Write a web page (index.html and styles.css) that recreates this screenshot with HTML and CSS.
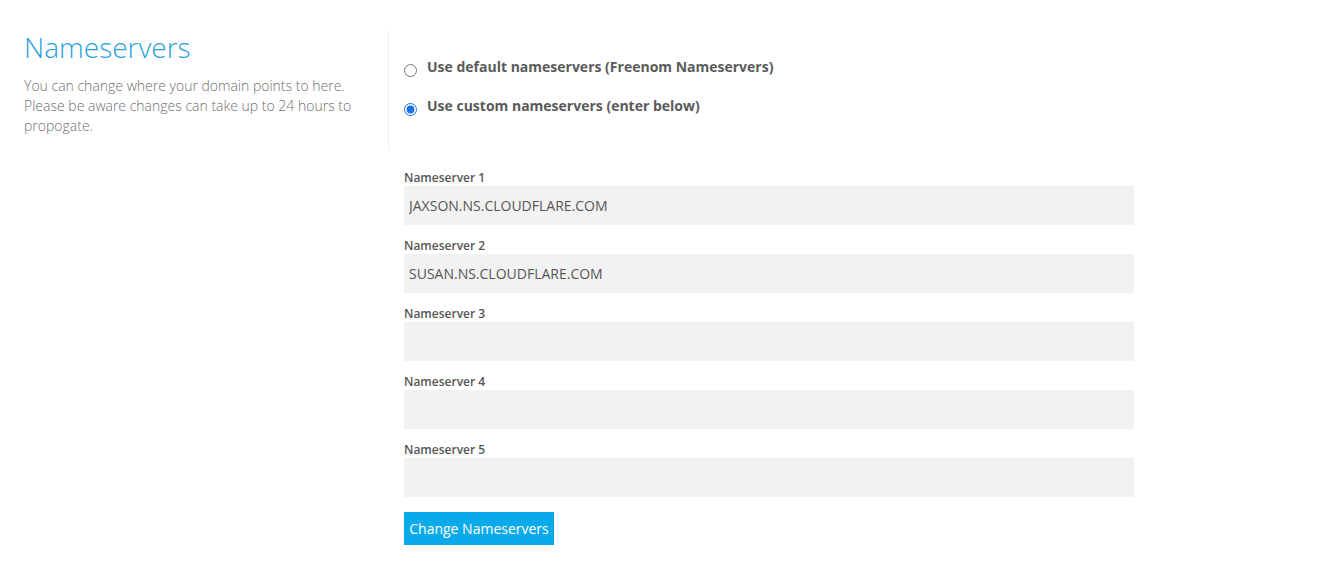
FILE: index.html
```html
<!DOCTYPE html>
<html>
<head>
<meta charset="utf-8">
<link rel="stylesheet" href="styles.css">
</head>
<body>
<div class="page">
  <div class="top">
    <div class="intro">
      <h1 class="title">Nameservers</h1>
      <p class="desc">You can change where your domain points to here. Please be aware changes can take up to 24 hours to propogate.</p>
    </div>
    <div class="choices">
      <label class="choice"><input type="radio" name="ns" class="radio"><span>Use default nameservers (Freenom Nameservers)</span></label>
      <label class="choice"><input type="radio" name="ns" class="radio" checked><span>Use custom nameservers (enter below)</span></label>
    </div>
  </div>
  <form class="fields">
    <div class="field"><label class="flabel">Nameserver 1</label><input class="finput" type="text" value="JAXSON.NS.CLOUDFLARE.COM"></div>
    <div class="field"><label class="flabel">Nameserver 2</label><input class="finput" type="text" value="SUSAN.NS.CLOUDFLARE.COM"></div>
    <div class="field"><label class="flabel">Nameserver 3</label><input class="finput" type="text" value=""></div>
    <div class="field"><label class="flabel">Nameserver 4</label><input class="finput" type="text" value=""></div>
    <div class="field"><label class="flabel">Nameserver 5</label><input class="finput" type="text" value=""></div>
    <button type="button" class="btn">Change Nameservers</button>
  </form>
</div>
</body>
</html>
```
FILE: styles.css
```css
* { box-sizing: border-box; }
body {
  margin: 0;
  background: #fff;
  font-family: "Open Sans", "Liberation Sans", sans-serif;
  color: #555;
}
.page { padding-top: 30px; }
.top { display: flex; }
.intro { width: 388px; padding-left: 24px; padding-right: 30px; }
.title {
  margin: 0;
  font-size: 28px;
  line-height: 34px;
  font-weight: 300;
  color: #2a9fdc;
}
.desc {
  margin: 12px 0 0;
  font-size: 14px;
  line-height: 20px;
  font-weight: 300;
  color: #6f6f6f;
}
.choices {
  border-left: 1px solid #eeeeee;
  height: 120px;
  padding: 30px 0 0 15px;
  display: flex;
  flex-direction: column;
  gap: 19px;
}
.choice {
  display: flex;
  align-items: center;
  gap: 10px;
  font-size: 14px;
  font-weight: 700;
  line-height: 20px;
  color: #5a5a5a;
}
.choice span { position: relative; top: -3px; }
.radio {
  margin: 0;
  width: 13px;
  height: 13px;
  accent-color: #1a73e8;
}
.fields {
  margin: 20px 0 0 404px;
  width: 730px;
  display: flex;
  flex-direction: column;
}
.field { display: flex; flex-direction: column; margin-bottom: 13px; }
.flabel {
  font-size: 12px;
  font-weight: 600;
  line-height: 16px;
  color: #555;
  margin-bottom: 0;
}
.finput {
  height: 39px;
  border: none;
  background: #f2f2f2;
  padding: 0 5px;
  font-family: "Open Sans", "Liberation Sans", sans-serif;
  font-size: 14px;
  color: #555;
  outline: none;
}
.btn {
  align-self: flex-start;
  margin-top: 2px;
  height: 33px;
  width: 150px;
  border: none;
  background: #0aa9ea;
  color: #fff;
  font-family: "Open Sans", "Liberation Sans", sans-serif;
  font-size: 14px;
  padding: 0;
}
```
